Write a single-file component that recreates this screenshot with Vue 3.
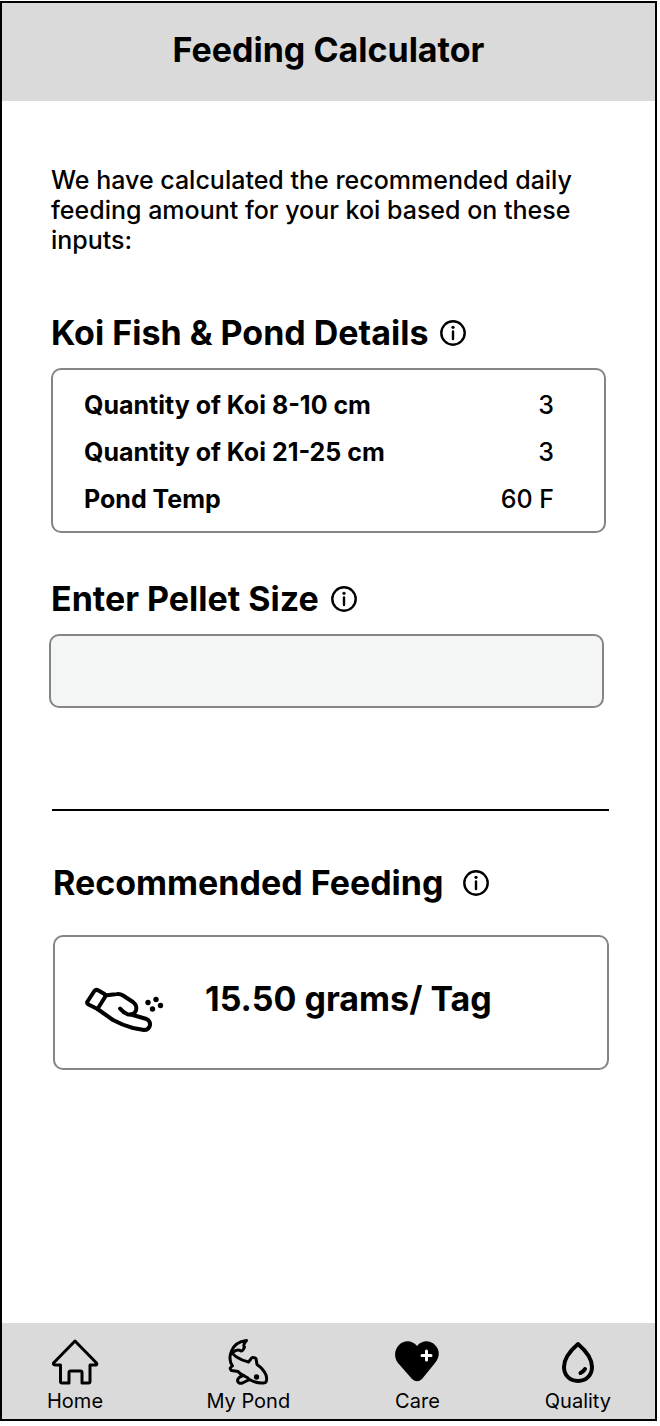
<template>
  <div class="screen">
    <header class="header">
      <h1>Feeding Calculator</h1>
    </header>

    <main class="content">
      <p class="intro">
        We have calculated the recommended daily feeding amount for your koi based on these inputs:
      </p>

      <section class="details">
        <div class="heading">
          <h2>Koi Fish &amp; Pond Details</h2>
          <button type="button" class="info" aria-label="About pond details">
            <svg viewBox="0 0 26 26">
              <circle cx="13" cy="13" r="11.7" />
              <path d="M13 11.500v7.500" />
              <circle class="dot" cx="13" cy="7.3" r="1.600" />
            </svg>
          </button>
        </div>
        <dl class="card">
          <div v-for="row in details" :key="row.label" class="row">
            <dt>{{ row.label }}</dt>
            <dd>{{ row.value }}</dd>
          </div>
        </dl>
      </section>

      <section class="pellet">
        <div class="heading">
          <h2><label for="pellet-size">Enter Pellet Size</label></h2>
          <button type="button" class="info" aria-label="About pellet size">
            <svg viewBox="0 0 26 26">
              <circle cx="13" cy="13" r="11.7" />
              <path d="M13 11.500v7.500" />
              <circle class="dot" cx="13" cy="7.3" r="1.600" />
            </svg>
          </button>
        </div>
        <input id="pellet-size" v-model="pelletSize" type="text" />
      </section>

      <hr />

      <section class="result">
        <div class="heading">
          <h2>Recommended Feeding</h2>
          <button type="button" class="info" aria-label="About recommended feeding">
            <svg viewBox="0 0 26 26">
              <circle cx="13" cy="13" r="11.7" />
              <path d="M13 11.500v7.500" />
              <circle class="dot" cx="13" cy="7.3" r="1.600" />
            </svg>
          </button>
        </div>
        <div class="card amount">
          <!-- hand dropping pellets -->
          <svg class="hand" viewBox="0 0 80 48">
            <path d="M2.5 14.5 9 4.500Q10.5 2 13.5 3.500L19.500 7Q21 8 20 10L12.500 22 3.500 17.500Q1.500 16.500 2.500 14.500Z" />
            <path d="M20 8.500 32 7Q35 6.500 38 8.500L48 15Q52.500 18.500 51 23.500Q49 28 43 27.500Q38 25.500 35 21.500" />
            <path d="M12.500 22 28 33Q37 38 48 41L59 43Q64 43 65 38Q65.500 34 61.500 32L46 27.500" />
            <circle class="dot" cx="63" cy="15.500" r="2.700" />
            <circle class="dot" cx="71" cy="12.500" r="2.700" />
            <circle class="dot" cx="75.500" cy="18.500" r="2.700" />
            <circle class="dot" cx="67.500" cy="22" r="2.700" />
          </svg>
          <strong>15.50 grams/ Tag</strong>
        </div>
      </section>
    </main>

    <nav class="nav">
      <a href="#home">
        <svg viewBox="0 0 48 48">
          <path d="M24 3 2.500 25Q2 27 4.500 27H9.500V43.500Q9.500 45 11 45H18V34.500Q18 33 19.500 33H29.500Q31 33 31 34.500V45H37.500Q39 45 39 43.500V27H44.500Q46.500 27 45.500 25Z" />
        </svg>
        Home
      </a>
      <a href="#pond">
        <svg viewBox="0 0 48 48">
          <path d="M7.500 13C5 19 5 23 8.500 28Q4.500 30 7.500 32.500L14 33.500Q16 36 19.500 37.500Q14 39 13.500 42.500Q14 46 18.500 45L25.500 41.500Q34 46.500 41.500 44.500Q43.500 42.500 42 37Q39.500 31 33 26.500L32 20.500Q28 18 26.500 21.500L24.500 24Q18 22.500 12.500 19Q9 17 7.500 13Q11 4 22.500 2.500Q18.500 7 20.500 9Q19 13 17 13Q13 10.500 9 14.500" />
          <path d="M19.500 37.500 24 40" />
          <circle class="dot" cx="32.500" cy="39" r="2.700" />
        </svg>
        My Pond
      </a>
      <a href="#care">
        <svg viewBox="0 0 48 48">
          <path class="heart" d="M24 8C19 2 11 2 6 7C1 12 1 20 5 25L19 41Q24 45.500 29 41L42 25C47 19 47 12 42 7C37 2 29 2 24 8Z" />
          <path class="plus" d="M33.500 13V22M29 17.500H38" />
        </svg>
        Care
      </a>
      <a href="#quality">
        <svg class="drop" viewBox="0 0 48 48">
          <path d="M24 6Q10 18 10 29C10 37.500 16 43 24 43S38 37.500 38 29Q38 18 24 6Z" />
          <path d="M26.500 35Q29.500 33.500 31 31" />
        </svg>
        Quality
      </a>
    </nav>
  </div>
</template>

<script setup>
import { ref } from 'vue';

const pelletSize = ref('');

// values entered on the previous screens
const details = [
  { label: 'Quantity of Koi 8-10 cm', value: '3' },
  { label: 'Quantity of Koi 21-25 cm', value: '3' },
  { label: 'Pond Temp', value: '60 F' },
];
</script>

<style>
body {
  background: #fff;
}
</style>

<style scoped>
* {
  box-sizing: border-box;
}

.screen {
  display: flex;
  flex-direction: column;
  min-height: calc(100vh - 6px);
  margin: 1px 3px 5px 0;
  border: 2px solid #000;
  color: #000;
  font-family: Inter, "Liberation Sans", sans-serif;
}

.header {
  display: flex;
  justify-content: center;
  height: 98px;
  padding-top: 27px;
  background: #dadada;
}

h1,
h2,
strong {
  margin: 0;
  font-size: 34px;
  font-weight: 700;
  line-height: 40px;
}

.content {
  flex: 1;
  padding: 64px 46px 40px 47px;
}

.intro {
  margin: 0;
  padding: 0 20px 0 2px;
  font-size: 25px;
  font-weight: 500;
  line-height: 30px;
}

.heading {
  display: flex;
  align-items: center;
  gap: 12px;
}

.info {
  width: 26px;
  height: 26px;
  padding: 0;
  border: 0;
  background: none;
}

svg {
  display: block;
  fill: none;
  stroke: #000;
  stroke-width: 3;
  stroke-linecap: round;
  stroke-linejoin: round;
}

.info svg {
  width: 26px;
  height: 26px;
  stroke-width: 2.4;
}

svg .dot {
  fill: #000;
  stroke: none;
}

.card {
  margin: 0;
  border: 2px solid #858585;
  border-radius: 10px;
}

.details {
  margin-top: 58px;
  padding: 0 3px 0 2px;
}

.details .card {
  margin-top: 15px;
  padding: 12px 50px 8px 31px;
}

.row {
  display: flex;
  justify-content: space-between;
  font-size: 25px;
  line-height: 47px;
}

dt {
  font-weight: 700;
}

dd {
  margin: 0;
  font-weight: 500;
}

.pellet {
  margin-top: 46px;
  padding-right: 5px;
}

.pellet .heading {
  padding-left: 2px;
}

input {
  display: block;
  width: 100%;
  height: 74px;
  margin-top: 15px;
  padding: 0 32px;
  border: 2px solid #858585;
  border-radius: 10px;
  background: #f4f6f5;
  font: inherit;
  font-size: 25px;
}

hr {
  height: 2px;
  margin: 101px 0 0 3px;
  border: 0;
  background: #000;
}

.result {
  margin-top: 52px;
  padding-left: 4px;
}

.result .heading {
  gap: 20px;
}

.amount {
  display: flex;
  align-items: flex-start;
  gap: 40px;
  height: 135px;
  margin-top: 32px;
  padding: 42px 30px 0;
}

.hand {
  width: 80px;
  height: 48px;
  margin-top: 8px;
  stroke-width: 4;
}

.nav {
  display: flex;
  justify-content: space-between;
  height: 96px;
  padding: 15px 44px 0 45px;
  background: #dadada;
}

.nav a {
  display: flex;
  flex-direction: column;
  align-items: center;
  color: #000;
  font-size: 20px;
  line-height: 30px;
  text-decoration: none;
}

.nav svg {
  width: 48px;
  height: 48px;
}

.nav .drop {
  stroke-width: 4;
}

.nav .heart {
  fill: #000;
  stroke: none;
}

.nav .plus {
  stroke: #fff;
}
</style>
